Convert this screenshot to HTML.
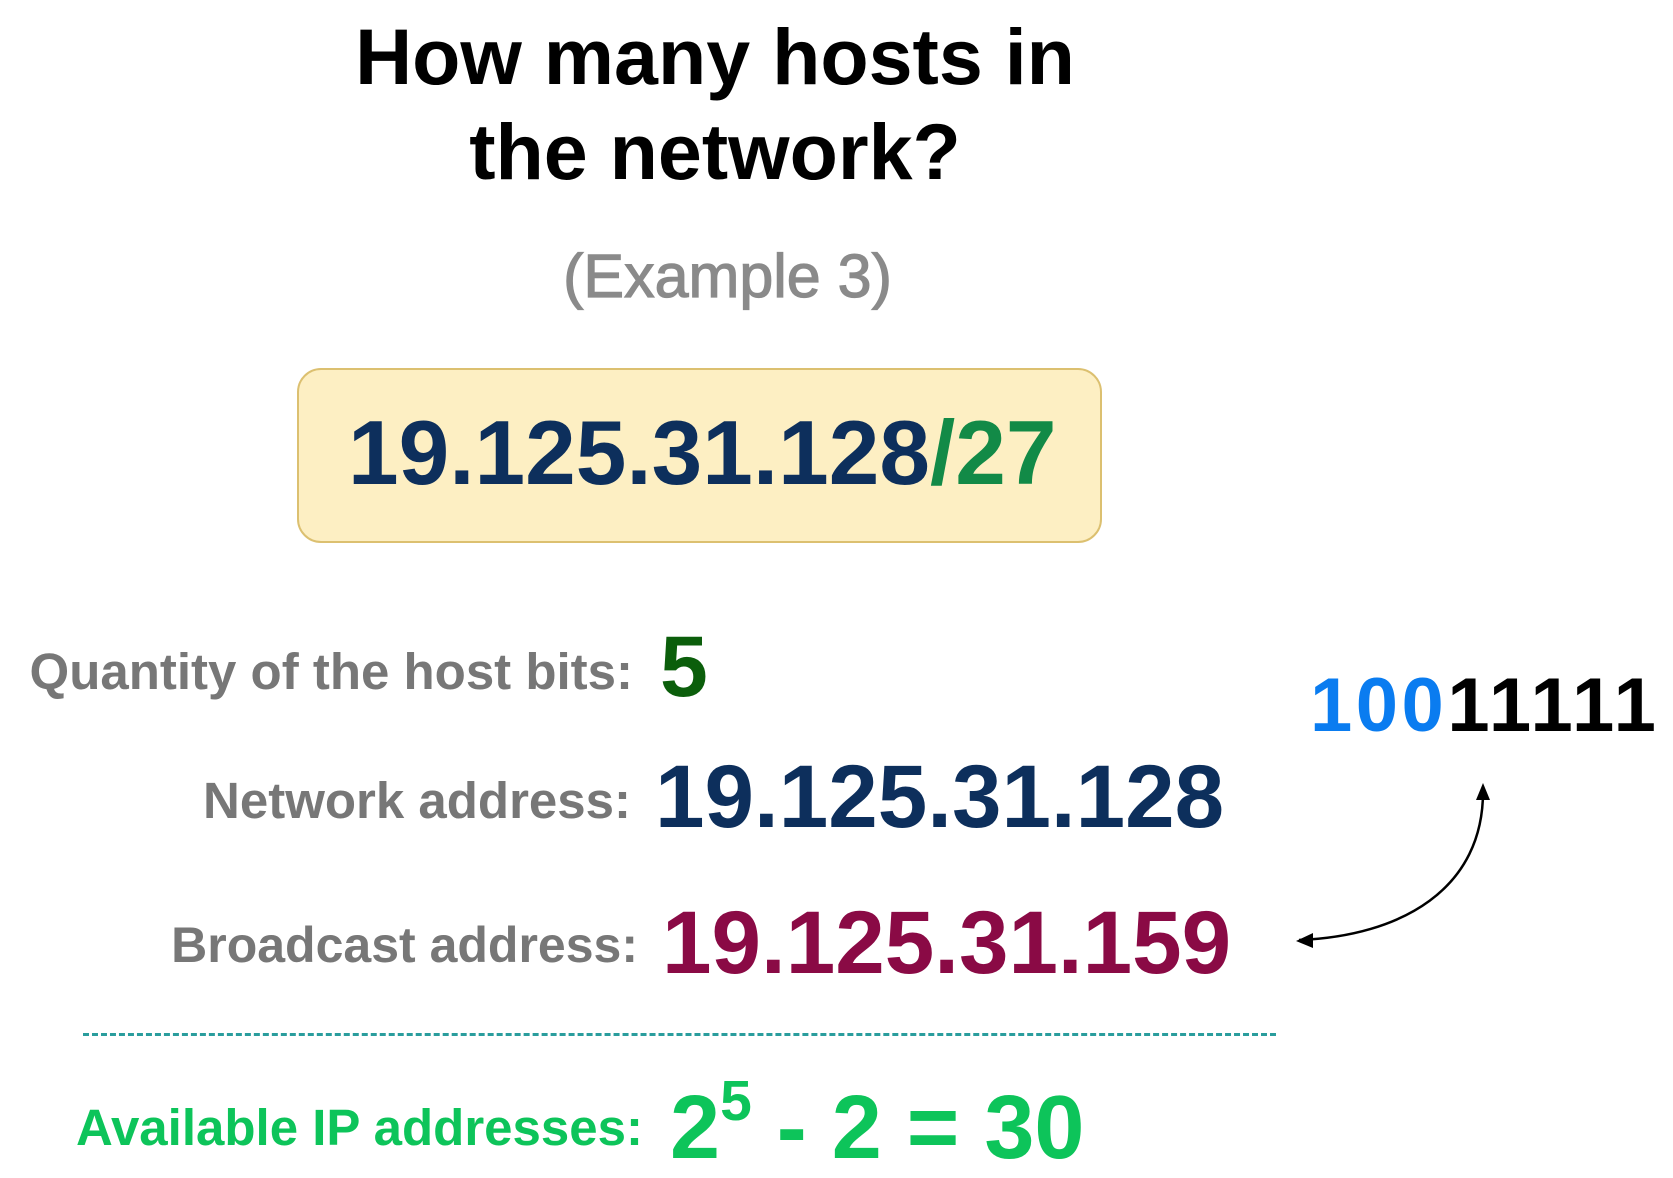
<!DOCTYPE html>
<html><head><meta charset="utf-8"><style>
html,body{margin:0;padding:0;background:#fff;width:1673px;height:1178px;overflow:hidden;position:relative;font-family:"Liberation Sans",sans-serif;font-weight:bold}
.t{position:absolute;line-height:1;white-space:nowrap}
.r{text-align:right}
</style></head><body>
<div class="t" style="left:0;width:1430px;text-align:center;top:17px;font-size:79px;color:#000">How many hosts in</div>
<div class="t" style="left:0;width:1430px;text-align:center;top:112px;font-size:79px;color:#000">the network?</div>
<div class="t" style="left:0;width:1455px;text-align:center;top:246px;font-size:61px;color:#8a8a8a;font-weight:normal;-webkit-text-stroke:1.2px #8a8a8a">(Example 3)</div>
<div style="position:absolute;left:297px;top:368px;width:805px;height:175px;box-sizing:border-box;background:#fdefc3;border:2px solid #dcc070;border-radius:24px"></div>
<div class="t" style="left:348px;top:408px;font-size:91px;color:#0d2f5c">19.125.31.128<span style="color:#128a47">/27</span></div>
<div class="t r" style="left:0;width:633px;top:646px;font-size:51px;color:#777">Quantity of the host bits:</div>
<div class="t" style="left:660px;top:624px;font-size:86px;color:#0b5e0b">5</div>
<div class="t r" style="left:0;width:631px;top:775px;font-size:51px;color:#777">Network address:</div>
<div class="t" style="left:655px;top:752px;font-size:89px;color:#0d2f5c">19.125.31.128</div>
<div class="t r" style="left:0;width:638px;top:920px;font-size:50px;color:#777">Broadcast address:</div>
<div class="t" style="left:662px;top:898px;font-size:89px;color:#8a0a45">19.125.31.159</div>
<div style="position:absolute;left:83px;top:1033px;width:1193px;border-top:3px dashed #2a9d9d"></div>
<div class="t" style="left:76px;top:1102px;font-size:51px;color:#0dc45a">Available IP addresses:</div>
<div class="t" style="left:670px;top:1083px;font-size:90px;color:#0dc45a">2<span style="font-size:57px;position:relative;top:-38px">5</span> - 2 = 30</div>
<div class="t" style="left:1310px;top:668px;font-size:76px;color:#000;letter-spacing:3.5px"><span style="color:#0a7cf0">100</span>11111</div>
<svg style="position:absolute;left:0;top:0" width="1673" height="1178">
<path d="M1299 940 C1400 936 1485 890 1483 788" fill="none" stroke="#000" stroke-width="2.5"/>
<path d="M1476 800 L1483 783 L1490 800 Z" fill="#000"/>
<path d="M1313 933 L1296 941 L1313 948 Z" fill="#000"/>
</svg>
</body></html>
